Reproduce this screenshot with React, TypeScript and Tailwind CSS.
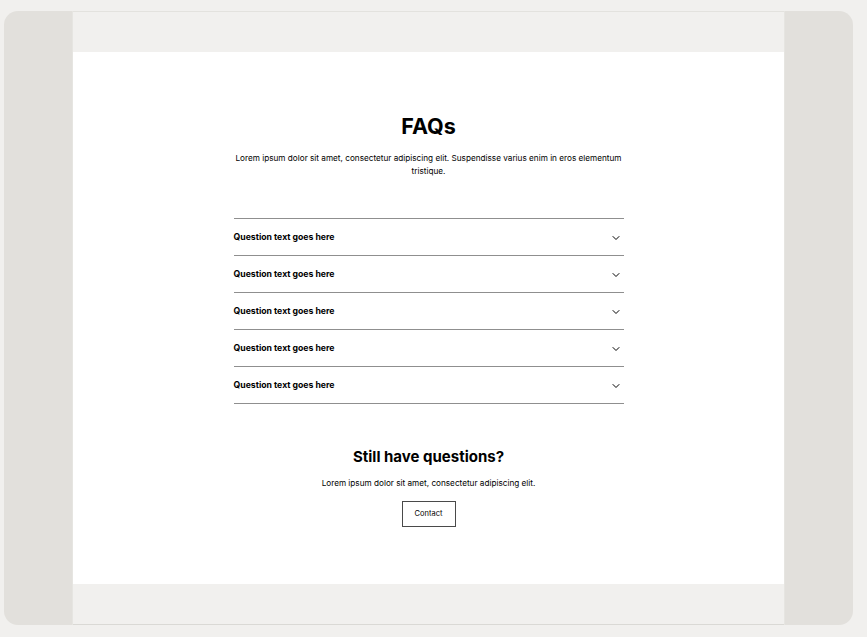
import { ChevronDown } from "lucide-react";

const questions = [
  "Question text goes here",
  "Question text goes here",
  "Question text goes here",
  "Question text goes here",
  "Question text goes here",
];

const App = () => {
  return (
    <div
      className="min-h-[637px] bg-[#f1f0ee] pt-[11px] pl-[4px] pr-[14px] pb-[12px]"
      style={{ fontFamily: "Inter, 'Noto Sans', sans-serif" }}
    >
      <div className="flex h-[614px] overflow-hidden rounded-[14px]">
        <div className="w-[68px] bg-[#e2e0dc]" />

        <div className="flex flex-1 flex-col border-x border-[#e6e5e1]">
          <div className="h-[41px] border-t border-[#e3e2de] bg-[#f1f0ee]" />

          <main className="flex flex-1 flex-col items-center bg-white pt-[61px] text-black">
            <h1 className="text-[21.5px] font-bold leading-[26px]">FAQs</h1>
            <p className="mt-[13px] w-[400px] text-center text-[8.2px] leading-[13px]">
              Lorem ipsum dolor sit amet, consectetur adipiscing elit. Suspendisse varius enim in eros elementum
              tristique.
            </p>

            <div className="mt-[40px] w-[390px] border-b border-[#8f8f8f]">
              {questions.map((q, i) => (
                <div
                  key={i}
                  className="flex h-[37px] items-center justify-between border-t border-[#8f8f8f] pt-[1px]"
                >
                  <span className="text-[8.7px] font-bold">{q}</span>
                  <ChevronDown size={12} strokeWidth={2} className="mr-[2px]" />
                </div>
              ))}
            </div>

            <h2 className="mt-[44px] text-[15px] font-bold leading-[18px]">Still have questions?</h2>
            <p className="mt-[11px] text-[8.2px] leading-[13px]">
              Lorem ipsum dolor sit amet, consectetur adipiscing elit.
            </p>
            <button className="mt-[11px] h-[26px] w-[54px] border border-[#4a4a4a] text-[7.5px]">
              Contact
            </button>
          </main>

          <div className="h-[41px] border-b border-[#dad9d5] bg-[#f1f0ee]" />
        </div>

        <div className="w-[68px] bg-[#e2e0dc]" />
      </div>
    </div>
  );
};

export default App;
